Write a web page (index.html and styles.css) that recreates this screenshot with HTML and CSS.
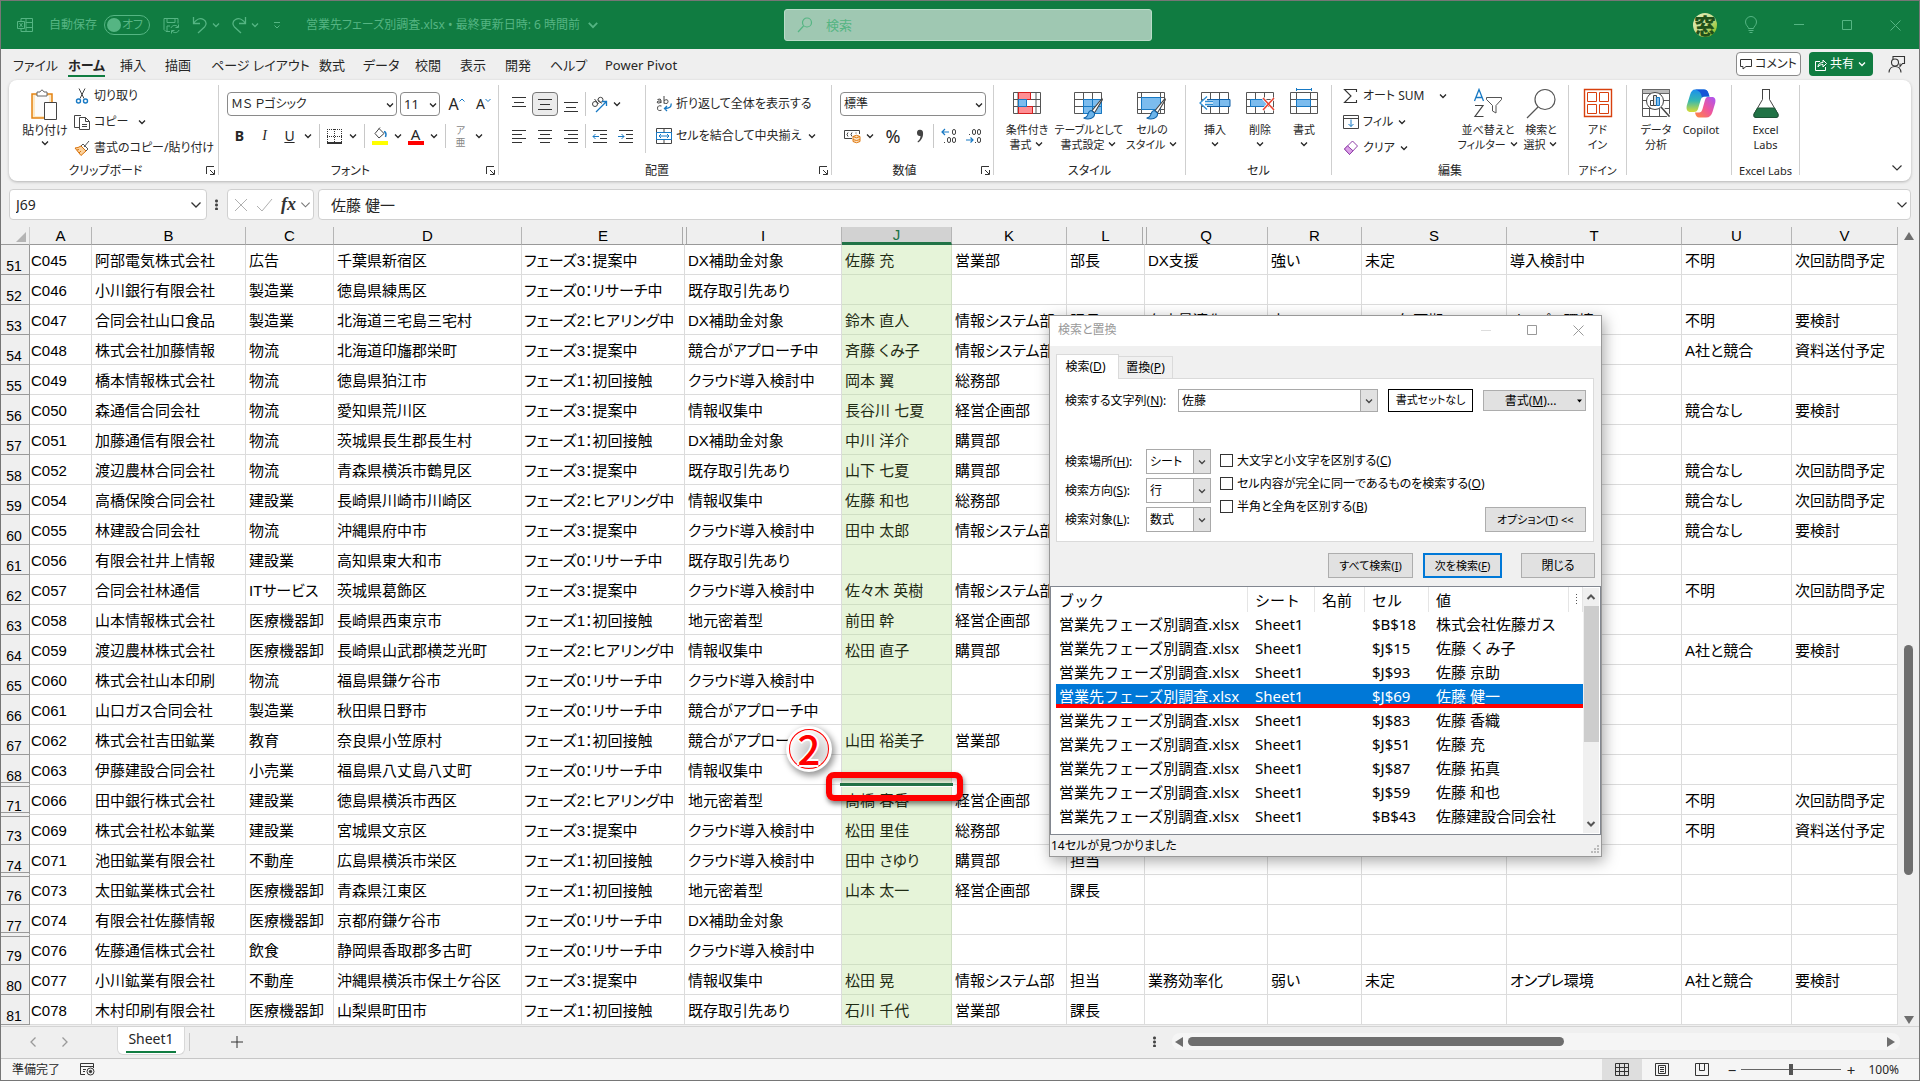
FILE: index.html
```html
<!DOCTYPE html>
<html lang="ja">
<head>
<meta charset="utf-8">
<title>営業先フェーズ別調査.xlsx</title>
<link rel="stylesheet" href="styles.css">
</head>
<body>
<svg class="sprite" aria-hidden="true">
  <symbol id="chev" viewBox="0 0 10 10"><path d="M2 3.5l3 3 3-3" fill="none" stroke="currentColor" stroke-width="1.3"/></symbol>
  <symbol id="launch" viewBox="0 0 9 9"><path d="M.5 8V.5H8M4 4l4 4M8.500 4v4.500H4" fill="none" stroke="#333"/></symbol>
  <symbol id="brush" viewBox="0 0 20 22"><path d="M18.500 1.500L9 13l2.500 2L19 2.500z" fill="#fff" stroke="#444"/><path d="M8.500 13c-3 0-3 3-4 5-.5 1.200-2 2-3.500 2 4 2 11 1 10.500-4.500z" fill="#6cb4ea" stroke="#0f62a8"/></symbol>
</svg>
<div class="window">
  <header class="titlebar">
    <div class="title-left">
      <svg class="app-icon" width="16" height="16" viewBox="0 0 16 16" fill="none" stroke="currentColor"><path d="M4 4V1.500h11.500v13H4V12M9 1.500v13M9 5.500h6.500M9 10.500h6.500"/><path d="M.5 4.500h7v7h-7zM2.500 6l3 4M5.500 6l-3 4"/></svg>
      <span class="autosave-label">自動保存</span>
      <button class="toggle" type="button"><i></i>オフ</button>
      <button class="save" type="button" aria-label="上書き保存"><svg width="17" height="17" viewBox="0 0 17 17" fill="none" stroke="currentColor"><path d="M7 14.500H3L1 12.500V1.500h14v5M4 1.500v4h8v-4M4 14v-5h3"/><path d="M8 11c1-3 5-3.500 7-1M15.500 7.500V10.500h-3M16 13c-1 3-5 3.500-7 1M8.500 16.500v-3h3"/></svg></button>
      <button class="undo" type="button" aria-label="元に戻す"><svg width="16" height="18" viewBox="0 0 16 18" fill="none" stroke="currentColor" stroke-width="1.300"><path d="M1.500 1v6.500H8M1.500 7.500C4 3.500 8 1.500 11.500 3.500s3 5.500 1 7.500L6 17"/></svg></button>
      <svg class="chev c-undo"><use href="#chev"/></svg>
      <button class="redo" type="button" aria-label="やり直し"><svg width="16" height="18" viewBox="0 0 16 18" fill="none" stroke="currentColor" stroke-width="1.300"><path d="M14.500 1v6.500H8M14.500 7.500C12 3.500 8 1.500 4.500 3.500s-3 5.500-1 7.500L10 17"/></svg></button>
      <svg class="chev c-undo"><use href="#chev"/></svg>
      <svg class="customize" width="10" height="10" viewBox="0 0 10 10" fill="none" stroke="currentColor"><path d="M2 2.500h6M2.500 5.500L5 8l2.500-2.500"/></svg>
      <span class="doc-title">営業先フェーズ別調査.xlsx • 最終更新日時: 6 時間前</span>
      <svg class="chev c-title"><use href="#chev"/></svg>
    </div>
    <label class="search">
      <svg width="16" height="16" viewBox="0 0 16 16" fill="none" stroke="currentColor" stroke-width="1.200"><circle cx="10" cy="5.500" r="4.500"/><path d="M6.500 9L1 15"/></svg>
      <input type="text" placeholder="検索" aria-label="検索">
    </label>
    <div class="title-right">
      <span class="avatar">窓</span>
      <button type="button" aria-label="ヒント"><svg width="14" height="18" viewBox="0 0 14 18" fill="none" stroke="currentColor"><path d="M4.500 12.500c0-2-3-3-3-6.500a5.500 5.500 0 0111 0c0 3.500-3 4.500-3 6.500zM4.500 14.500h5M5.500 16.500h3"/></svg></button>
      <button type="button" aria-label="最小化"><svg width="10" height="10" viewBox="0 0 10 10" stroke="currentColor"><path d="M0 4.500h10"/></svg></button>
      <button type="button" aria-label="最大化"><svg width="10" height="10" viewBox="0 0 10 10" fill="none" stroke="currentColor"><path d="M.5.5h9v9h-9z"/></svg></button>
      <button type="button" aria-label="閉じる"><svg width="11" height="11" viewBox="0 0 11 11" stroke="currentColor"><path d="M.5.5l10 10M10.500.5l-10 10"/></svg></button>
    </div>
  </header>

  <nav class="menubar">
    <div class="menus">
      <a href="#">ファイル</a><a href="#" class="on">ホーム</a><a href="#">挿入</a><a href="#">描画</a><a href="#">ページ レイアウト</a><a href="#">数式</a><a href="#">データ</a><a href="#">校閲</a><a href="#">表示</a><a href="#">開発</a><a href="#">ヘルプ</a><a href="#">Power Pivot</a>
    </div>
    <div class="menu-actions">
      <button class="comment" type="button"><svg width="12" height="12" viewBox="0 0 12 12" fill="none" stroke="#333"><path d="M.5 1.500h11v7H6l-3 2.500V8.500H.5z"/></svg>コメント</button>
      <button class="share" type="button"><svg width="12" height="13" viewBox="0 0 12 13" fill="none" stroke="#fff"><path d="M5 3.500H.5v9h10V9M3 9c0-3 2-4.500 5-4.500V2l3.500 3.500L8 9V6.500C6 6.500 4 7 3 9z"/></svg>共有<svg class="chev"><use href="#chev"/></svg></button>
      <button class="presence" type="button" aria-label="共有相手"><svg width="18" height="18" viewBox="0 0 18 18" fill="none" stroke="#333" stroke-width="1.100"><path d="M5 4V1.500h11.500v7h-2l-2.500 3V8.500"/><circle cx="7" cy="7.500" r="3.500"/><path d="M1 17.500c.5-8 11.500-8 12 0"/></svg></button>
    </div>
  </nav>

  <section class="ribbon">
    <div class="group g-clip">
      <div class="body">
        <button class="big paste" type="button"><svg width="30" height="32" viewBox="0 0 30 32"><path d="M2 5h20v24H2z" fill="#fde8c4" stroke="#e38312" stroke-width="1.500"/><path d="M5 7h14v20H5z" fill="#fbfbfb"/><path d="M7 3h3q2-4 4 0h3v4H7z" fill="#fff" stroke="#666"/><path d="M14.500 13.500h12v17h-12z" fill="#fff" stroke="#444"/></svg><span>貼り付け</span><svg class="chev"><use href="#chev"/></svg></button>
        <div class="stack">
          <button type="button"><svg width="16" height="16" viewBox="0 0 16 16" fill="none"><path d="M5 .5l5 10M11 .5l-5 10" stroke="#444"/><circle cx="4.500" cy="13" r="2" stroke="#1779c4" stroke-width="1.400"/><circle cx="11.500" cy="13" r="2" stroke="#1779c4" stroke-width="1.400"/></svg>切り取り</button>
          <button type="button"><svg width="16" height="16" viewBox="0 0 16 16" fill="none" stroke="#444"><path d="M5 13.500H.5V1.500H7M5.500 3.500h6l4 4v8h-10zM11.500 3.500v4h4M8 10.500h5M8 12.500h5"/></svg>コピー<svg class="chev far"><use href="#chev"/></svg></button>
          <button type="button"><svg width="16" height="16" viewBox="0 0 16 16"><path d="M15 1l-5 6M9 4l5 5-2 2-5-5z" fill="#fff" stroke="#555"/><path d="M7 6l5 5-5 4.500L1 8q3 0 6-2z" fill="#fbd19b" stroke="#d9730d"/><path d="M3 10l2-.5M5 13l2-2" stroke="#d9730d"/></svg>書式のコピー/貼り付け</button>
        </div>
      </div>
      <div class="label"><span>クリップボード</span><svg><use href="#launch"/></svg></div>
    </div>

    <div class="group g-font">
      <div class="body rows">
        <div class="row">
          <span class="combo w-font"><select aria-label="フォント"><option>ＭＳ Ｐゴシック</option></select><svg class="chev"><use href="#chev"/></svg></span>
          <span class="combo w-size"><select aria-label="フォント サイズ"><option>11</option></select><svg class="chev"><use href="#chev"/></svg></span>
          <button class="tool t27" type="button" aria-label="フォント サイズの拡大"><span class="fs-up">A</span><svg width="6" height="12" viewBox="0 0 6 12" fill="none" stroke="#1779c4"><path d="M.5 3.500L3 1l2.500 2.500"/></svg></button>
          <button class="tool t27" type="button" aria-label="フォント サイズの縮小"><span class="fs-down">A</span><svg width="6" height="12" viewBox="0 0 6 12" fill="none" stroke="#1779c4"><path d="M.5 1L3 3.500 5.500 1"/></svg></button>
        </div>
        <div class="row">
          <button class="tool t25" type="button"><b>B</b></button>
          <button class="tool t25" type="button"><i class="ital">I</i></button>
          <button class="tool t25" type="button"><u>U</u></button>
          <svg class="chev"><use href="#chev"/></svg><hr>
          <button class="tool t25" type="button" aria-label="罫線"><svg width="15" height="15" viewBox="0 0 15 15" fill="none" stroke="#333"><path d="M.5 0v14M14.500 0v14M7.500 0v14M0 .5h15M0 7.500h15" stroke-dasharray="1 1"/><path d="M0 14h15" stroke-width="2"/></svg></button>
          <svg class="chev"><use href="#chev"/></svg><hr>
          <button class="tool t25" type="button" aria-label="塗りつぶしの色"><svg width="16" height="18" viewBox="0 0 16 18"><path d="M7 1.500l5 5-5 4.500-4-4.500 5-6" fill="none" stroke="#444"/><path d="M12 4.500q3 1 1.500 5.500" stroke="#1779c4" fill="none" stroke-width="1.500"/><path d="M0 14h16v4H0z" fill="#ff0"/></svg></button>
          <svg class="chev"><use href="#chev"/></svg>
          <button class="tool t25 fcolor" type="button" aria-label="フォントの色"><span>A</span></button>
          <svg class="chev"><use href="#chev"/></svg><hr>
          <button class="tool t25 ruby" type="button"><span>ア</span><span>亜</span></button>
          <svg class="chev"><use href="#chev"/></svg>
        </div>
      </div>
      <div class="label"><span>フォント</span><svg><use href="#launch"/></svg></div>
    </div>

    <div class="group g-align">
      <div class="body">
        <div class="rows al-a">
          <div class="row">
            <button class="tool t26" type="button" aria-label="上揃え"><svg width="14" height="16" viewBox="0 0 14 16" stroke="#333"><path d="M0 1.500h14M2 6.500h10M0 10.500h14"/></svg></button>
            <button class="tool t26 pressed" type="button" aria-label="上下中央揃え"><svg width="14" height="16" viewBox="0 0 14 16" stroke="#333"><path d="M0 3.500h14M2 8.500h10M0 13.500h14"/></svg></button>
            <button class="tool t26" type="button" aria-label="下揃え"><svg width="14" height="16" viewBox="0 0 14 16" stroke="#333"><path d="M0 6.500h14M2 11.500h10M0 15.500h14"/></svg></button>
            <hr>
            <button class="tool t25" type="button" aria-label="方向"><svg width="17" height="17" viewBox="0 0 17 17" fill="none" stroke="#444"><circle cx="4" cy="8" r="2.500"/><path d="M3.500 3l4 5M7 3.500l3.500 4"/><circle cx="9.500" cy="3.800" r="2.500"/><path d="M5 16L15 6M15.500 10V5.500H11" stroke="#1779c4" stroke-width="1.300"/></svg></button>
            <svg class="chev"><use href="#chev"/></svg>
          </div>
          <div class="row">
            <button class="tool t26" type="button" aria-label="左揃え"><svg width="14" height="14" viewBox="0 0 14 14" stroke="#333"><path d="M0 1.500h14M0 5.500h10M0 9.500h14M0 13.500h10"/></svg></button>
            <button class="tool t26" type="button" aria-label="中央揃え"><svg width="14" height="14" viewBox="0 0 14 14" stroke="#333"><path d="M0 1.500h14M2 5.500h10M0 9.500h14M2 13.500h10"/></svg></button>
            <button class="tool t26" type="button" aria-label="右揃え"><svg width="14" height="14" viewBox="0 0 14 14" stroke="#333"><path d="M0 1.500h14M4 5.500h10M0 9.500h14M4 13.500h10"/></svg></button>
            <hr>
            <button class="tool t25" type="button" aria-label="インデントを減らす"><svg width="15" height="14" viewBox="0 0 15 14" fill="none" stroke="#333"><path d="M1 1.500h14M8 5.500h7M8 9.500h7M1 13.500h14"/><path d="M7 7.500H1M3.500 5L1 7.500 3.500 10" stroke="#1779c4"/></svg></button>
            <button class="tool t26" type="button" aria-label="インデントを増やす"><svg width="15" height="14" viewBox="0 0 15 14" fill="none" stroke="#333"><path d="M1 1.500h14M8 5.500h7M8 9.500h7M1 13.500h14"/><path d="M0 7.500h6M3.500 5L6 7.500 3.500 10" stroke="#1779c4"/></svg></button>
          </div>
        </div>
        <div class="rows al-b">
          <div class="row"><button class="text" type="button"><svg width="16" height="16" viewBox="0 0 16 16" fill="none" stroke="#444"><path d="M1.500 3.500q3.500-1.500 3.500 1v2.500M5 5q-4-.5-4 1.200T5 6.500M8 0v7.500M8 4.500q4-2 4 1t-4 1.500M5.500 10q-4-1-4 2.200t4 2"/><path d="M15 7.500q1 5-6.500 5M11 10l-2.500 2.500L11 15" stroke="#1779c4" stroke-width="1.300"/></svg>折り返して全体を表示する</button></div>
          <div class="row"><button class="text" type="button"><svg width="16" height="16" viewBox="0 0 16 16" fill="none" stroke="#444"><path d="M.5.5h15v4H.5zM.5 11.500h15v4H.5zM8 .5v4M8 11.500v4"/><path d="M.5 4.500h15v7H.5zM3 8h10M5 6L3 8l2 2M11 6l2 2-2 2" stroke="#1779c4"/></svg>セルを結合して中央揃え</button><svg class="chev"><use href="#chev"/></svg></div>
        </div>
      </div>
      <div class="label"><span>配置</span><svg><use href="#launch"/></svg></div>
    </div>

    <div class="group g-num">
      <div class="body rows">
        <div class="row"><span class="combo w-num"><select aria-label="表示形式"><option>標準</option></select><svg class="chev"><use href="#chev"/></svg></span></div>
        <div class="row">
          <button class="tool t25" type="button" aria-label="通貨"><svg width="17" height="15" viewBox="0 0 17 15" fill="none" stroke="#444"><path d="M8 9.500H.5v-8h15V5M4 3.500q-2 2 0 4M8 3.500q-2 2 0 4M12 3.500v1"/><path d="M9 7.500v5q3.500 2.500 7 0v-5q-3.500-2.500-7 0zm0 0q3.500 2.500 7 0M9 10.500q3.500 2 7 0" fill="#fde3c4" stroke="#e07a10"/></svg></button>
          <svg class="chev"><use href="#chev"/></svg>
          <button class="tool pct" type="button">%</button>
          <button class="tool t25" type="button" aria-label="桁区切り"><svg width="8" height="14" viewBox="0 0 8 14"><path d="M1 4a3 3 0 016-.5c.5 4-1.500 8-5 10l-.5-1c2-1.500 3-3.500 3-5.500-2 .5-3.500-1-3.500-3z" fill="#444"/></svg></button>
          <hr>
          <button class="tool t25" type="button" aria-label="小数点以下の表示桁数を増やす"><svg width="16" height="16" viewBox="0 0 16 16" fill="none" stroke="#444"><rect x="11.500" y="1.500" width="3" height="5" rx="1.500"/><rect x="6.500" y="9.500" width="3" height="5" rx="1.500"/><rect x="11.500" y="9.500" width="3" height="5" rx="1.500"/><path d="M3.500 14v1"/><path d="M8 4H1M4 1L1 4l3 3" stroke="#1779c4" stroke-width="1.200"/></svg></button>
          <button class="tool t26" type="button" aria-label="小数点以下の表示桁数を減らす"><svg width="16" height="16" viewBox="0 0 16 16" fill="none" stroke="#444"><rect x="6.500" y="1.500" width="3" height="5" rx="1.500"/><rect x="11.500" y="1.500" width="3" height="5" rx="1.500"/><rect x="11.500" y="9.500" width="3" height="5" rx="1.500"/><path d="M3.500 6v1M9.500 14v1"/><path d="M0 12h7M4.500 9.500L7 12l-2.500 2.500" stroke="#1779c4" stroke-width="1.200"/></svg></button>
        </div>
      </div>
      <div class="label"><span>数値</span><svg><use href="#launch"/></svg></div>
    </div>

    <div class="group g-style">
      <div class="body">
        <button class="big b60" type="button"><svg width="28" height="32" viewBox="0 0 28 32" fill="none"><path d="M.5 4.500h27v21H.5zM5 4.500v21M23 4.500v21M.5 11.500h27M.5 18.500h27" stroke="#555"/><path d="M5.500 4.500h12v7h-12zM5.500 18.500h14v7h-14z" fill="#ff8e93" stroke="#d41f1f"/><path d="M5.500 11.500h8v7h-8z" fill="#7cbcee" stroke="#1779c4"/></svg><span>条件付き<br>書式 <svg class="chev"><use href="#chev"/></svg></span></button>
        <button class="big b64" type="button"><svg width="32" height="32" viewBox="0 0 32 32" fill="none"><path d="M1.500 4.500h27v21h-27zM10.500 4.500v21M19.500 4.500v21M1.500 11.500h27M1.500 18.500h27" stroke="#555"/><path d="M10.500 11.500h18v14h-18z" fill="#7cbcee" stroke="#1779c4"/><path d="M19.500 11.500v14M10.500 18.500h18" stroke="#1779c4"/><svg x="9" y="9" width="22" height="23" viewBox="0 0 20 22"><use href="#brush"/></svg></svg><span>テーブルとして<br>書式設定 <svg class="chev"><use href="#chev"/></svg></span></button>
        <button class="big b62" type="button"><svg width="32" height="32" viewBox="0 0 32 32" fill="none"><path d="M1.500 4.500h27v21h-27zM5.500 4.500v21M24.500 4.500v21M1.500 9.500h27M1.500 21.500h27" stroke="#555"/><path d="M5.500 9.500h19v12h-19z" fill="#7cbcee" stroke="#1779c4"/><svg x="9" y="9" width="22" height="23" viewBox="0 0 20 22"><use href="#brush"/></svg></svg><span>セルの<br>スタイル <svg class="chev"><use href="#chev"/></svg></span></button>
      </div>
      <div class="label"><span>スタイル</span></div>
    </div>

    <div class="group g-cell">
      <div class="body">
        <button class="big b46" type="button"><svg width="32" height="32" viewBox="0 0 32 32" fill="none"><path d="M2.500 4.500h27v21h-27zM11.500 4.500v21M20.500 4.500v21M2.500 11.500h27M2.500 18.500h27" stroke="#555"/><path d="M9 11.500h22v7H9z" fill="#7cbcee" stroke="#1060a8"/><path d="M20.500 11.500v7" stroke="#1060a8"/><path d="M14 12.500H8V8L0 15l8 7v-4.500h6z" fill="#fff"/><path d="M14 13.500H6M14 16.500H6M8 8.500L1 15l7 6.500" stroke="#2c8fd6" stroke-width="1.300"/></svg><span>挿入<br><svg class="chev"><use href="#chev"/></svg></span></button>
        <button class="big b44" type="button"><svg width="30" height="32" viewBox="0 0 30 32" fill="none"><path d="M1.500 4.500h27v21h-27zM10.500 4.500v21M19.500 4.500v21M1.500 11.500h27M1.500 18.500h27" stroke="#555"/><path d="M5.500 11.500h15l3 3.500-3 3.500h-15z" fill="#7cbcee" stroke="#1779c4"/><path d="M18 10l11 12M29 10L18 22" stroke="#fff" stroke-width="3"/><path d="M18 10l11 12M29 10L18 22" stroke="#e8412f" stroke-width="1.500"/></svg><span>削除<br><svg class="chev"><use href="#chev"/></svg></span></button>
        <button class="big b44" type="button"><svg width="30" height="32" viewBox="0 0 30 32" fill="none"><path d="M1.500 4.500h27v21h-27zM7.500 4.500v21M21.500 4.500v21M1.500 11.500h27M1.500 18.500h27" stroke="#555"/><path d="M7.500 11.500h14v7h-14z" fill="#7cbcee" stroke="#1779c4"/><path d="M7.500 0v3M22.500 0v3M7.500 1.500h15" stroke="#1779c4"/></svg><span>書式<br><svg class="chev"><use href="#chev"/></svg></span></button>
      </div>
      <div class="label"><span>セル</span></div>
    </div>

    <div class="group g-edit">
      <div class="body">
        <div class="stack">
          <button type="button"><svg width="16" height="16" viewBox="0 0 16 16" fill="none" stroke="#333" stroke-width="1.100"><path d="M13.500 4V1.500h-12L8 8l-6.500 6.500h12V12"/></svg>オート SUM<svg class="chev far"><use href="#chev"/></svg></button>
          <button type="button"><svg width="16" height="14" viewBox="0 0 16 14" fill="none" stroke="#444"><path d="M.5.5h15v13H.5zM.5 3.500h15"/><path d="M8 4.500v7M5.500 9L8 11.500 10.500 9" stroke="#1779c4"/></svg>フィル <svg class="chev"><use href="#chev"/></svg></button>
          <button type="button"><svg width="16" height="16" viewBox="0 0 16 16" stroke="#8f3fa8"><path d="M9.500 1l5 5-8 8.500-5-5.500z" fill="#fff"/><path d="M4.500 5.800l5.500 5-3.500 3.700-5-5.500z" fill="#dca0e8"/></svg>クリア <svg class="chev"><use href="#chev"/></svg></button>
        </div>
        <button class="big b56" type="button"><svg width="30" height="32" viewBox="0 0 30 32" fill="none"><path d="M1.500 13L6 1.500 10.500 13M3 9.500h6" stroke="#1779c4" stroke-width="1.300"/><path d="M2 17.500h8L2 28.500h8.500" stroke="#444" stroke-width="1.200"/><path d="M13.500 9.500h15v2l-5.500 6v7.500l-3.500-2v-5.500l-6-6z" stroke="#555"/></svg><span>並べ替えと<br>フィルター <svg class="chev"><use href="#chev"/></svg></span></button>
        <button class="big b50" type="button"><svg width="30" height="32" viewBox="0 0 30 32" fill="none" stroke="#555" stroke-width="1.200"><circle cx="19" cy="11.500" r="10"/><path d="M12 19L1 30"/></svg><span>検索と<br>選択 <svg class="chev"><use href="#chev"/></svg></span></button>
      </div>
      <div class="label"><span>編集</span></div>
    </div>

    <div class="group g-addin">
      <div class="body"><button class="big b58" type="button"><svg width="30" height="32" viewBox="0 0 30 32" fill="none" stroke="#d8400e"><path d="M1.500 1.500h27v27h-27z" stroke-width="1.400"/><path d="M4.500 4.500h9v9h-9zM16.500 4.500h9v9h-9zM4.500 16.500h9v9h-9zM16.500 16.500h9v9h-9z"/></svg><span>アド<br>イン</span></button></div>
      <div class="label"><span>アドイン</span></div>
    </div>

    <div class="group g-data">
      <div class="body">
        <button class="big b50" type="button"><svg width="30" height="32" viewBox="0 0 30 32" fill="none"><path d="M1.500 1.500h27v27h-27zM1.500 5.500h27M1.500 12.500h27M1.500 20.500h27M8.500 20v8.500M18.500 20v8.500" stroke="#555"/><path d="M1.500 1.500h27v4h-27z" fill="#bbb" stroke="#666"/><circle cx="14" cy="13" r="8.500" fill="#fff" stroke="#444"/><path d="M20 19l8 9" stroke="#fff" stroke-width="3.500"/><path d="M20 19l8 9" stroke="#444" stroke-width="1.500"/><path d="M9.500 12.500h3v5h-3z" stroke="#444"/><path d="M12.500 7.500h3v10h-3z" fill="#ddd" stroke="#444"/><path d="M15.500 9.500h3v8h-3z" fill="#7cbcee" stroke="#1779c4"/></svg><span>データ<br>分析</span></button>
        <button class="big b40" type="button"><svg width="30" height="32" viewBox="0 0 30 32"><defs><linearGradient id="c1" x1="0" y1="0" x2="0" y2="1"><stop offset="0" stop-color="#1b8fee"/><stop offset=".5" stop-color="#35b8b0"/><stop offset="1" stop-color="#d8dc33"/></linearGradient><linearGradient id="c2" x1="1" y1="0" x2="0" y2="1"><stop offset="0" stop-color="#a855f7"/><stop offset=".5" stop-color="#f0569a"/><stop offset="1" stop-color="#ff8a3c"/></linearGradient></defs><path d="M21 9h5c3 0 4 2.500 3.200 6l-2.700 9c-1 3.500-3 5.500-6.500 5.500h-7q-3 0-4-5h4q2.500 0 3.500-3.500L19 12q.5-2 2-3z" fill="url(#c2)"/><path d="M9 1.500h9q3.500 0 4.500 4l1 3h-5q-3 0-4 4l-2.500 8.500q-1 3-4 3H5c-4 0-5-2.500-4.200-6.500L4 7q1.500-5.500 5-5.500z" fill="url(#c1)"/><path d="M9 1.500h9q3.500 0 4.500 4l1 3h-5q-1.500 0-2.500 1-1-7-7-8z" fill="#1556d6"/></svg><span>Copilot</span></button>
      </div>
      <div class="label"></div>
    </div>

    <div class="group g-labs">
      <div class="body"><button class="big b68" type="button"><svg width="28" height="32" viewBox="0 0 28 32"><path d="M10.500 1.500v10L2 26q-1 3.500 2 3.500h20q3 0 2-3.500l-8.500-14.500v-10z" fill="#fff" stroke="#444"/><path d="M5.500 20h17l3.500 6q1 3.500-2 3.500H4Q1 29.500 2 26z" fill="#217346" stroke="#1c5537"/><path d="M10 1.500h8" stroke="#444"/></svg><span>Excel<br>Labs</span></button></div>
      <div class="label"><span>Excel Labs</span></div>
    </div>
    <button class="collapse" type="button" aria-label="リボンを折りたたむ"><svg width="12" height="12" viewBox="0 0 12 12" fill="none" stroke="#333" stroke-width="1.200"><path d="M1.500 3.500L6 8l4.500-4.500"/></svg></button>
  </section>

  <section class="formula-bar">
    <div class="namebox box"><input type="text" value="J69" aria-label="名前ボックス"><svg width="12" height="12" viewBox="0 0 12 12" fill="none" stroke="#333" stroke-width="1.300"><path d="M1.500 3.500L6 8l4.500-4.500"/></svg></div>
    <span class="vdots"></span>
    <div class="fx box"><svg width="14" height="14" viewBox="0 0 14 14" stroke="#b0b0b0"><path d="M1 1l12 12M13 1L1 13"/></svg><svg width="17" height="14" viewBox="0 0 17 14" fill="none" stroke="#b0b0b0"><path d="M1 8l5 5L16 1"/></svg><i>fx</i><svg width="11" height="12" viewBox="0 0 12 12" fill="none" stroke="#777" stroke-width="1.200"><path d="M1.500 3.500L6 8l4.500-4.500"/></svg></div>
    <div class="formula box"><input type="text" value="佐藤 健一" aria-label="数式バー"><svg width="12" height="12" viewBox="0 0 12 12" fill="none" stroke="#333" stroke-width="1.200"><path d="M1.500 3.500L6 8l4.500-4.500"/></svg></div>
  </section>

  <main class="sheet">
    <table class="grid">
      <colgroup><col class="c0"><col class="ca"><col class="cb"><col class="cc"><col class="cd"><col class="ce"><col class="ci"><col class="cj"><col class="ck"><col class="cl"><col class="cq"><col class="cr"><col class="cs"><col class="ct"><col class="cu"><col class="cv"></colgroup>
      <thead><tr><th class="corner"><svg width="10" height="10" viewBox="0 0 10 10"><path d="M10 0v10H0z" fill="#b4b4b4"/></svg></th><th>A</th><th>B</th><th>C</th><th>D</th><th class="cut">E</th><th class="after">I</th><th class="sel">J</th><th>K</th><th class="cut">L</th><th class="after">Q</th><th>R</th><th>S</th><th>T</th><th>U</th><th>V</th></tr></thead>
      <tbody>
      <tr><th>51<td>C045<td>阿部電気株式会社<td>広告<td>千葉県新宿区<td>フェーズ3：提案中<td>DX補助金対象<td>佐藤 充<td>営業部<td>部長<td>DX支援<td>強い<td>未定<td>導入検討中<td>不明<td>次回訪問予定
      <tr><th>52<td>C046<td>小川銀行有限会社<td>製造業<td>徳島県練馬区<td>フェーズ0：リサーチ中<td>既存取引先あり<td><td><td><td><td><td><td><td><td>
      <tr><th>53<td>C047<td>合同会社山口食品<td>製造業<td>北海道三宅島三宅村<td>フェーズ2：ヒアリング中<td>DX補助金対象<td>鈴木 直人<td>情報システム部<td>課長<td>在庫最適化<td>中<td>2025年下期<td>オンプレ環境<td>不明<td>要検討
      <tr><th>54<td>C048<td>株式会社加藤情報<td>物流<td>北海道印旛郡栄町<td>フェーズ3：提案中<td>競合がアプローチ中<td>斉藤 くみ子<td>情報システム部<td><td><td><td><td><td>A社と競合<td>資料送付予定
      <tr><th>55<td>C049<td>橋本情報株式会社<td>物流<td>徳島県狛江市<td>フェーズ1：初回接触<td>クラウド導入検討中<td>岡本 翼<td>総務部<td><td><td><td><td><td><td>
      <tr><th>56<td>C050<td>森通信合同会社<td>物流<td>愛知県荒川区<td>フェーズ3：提案中<td>情報収集中<td>長谷川 七夏<td>経営企画部<td><td><td><td><td><td>競合なし<td>要検討
      <tr><th>57<td>C051<td>加藤通信有限会社<td>物流<td>茨城県長生郡長生村<td>フェーズ1：初回接触<td>DX補助金対象<td>中川 洋介<td>購買部<td><td><td><td><td><td><td>
      <tr><th>58<td>C052<td>渡辺農林合同会社<td>物流<td>青森県横浜市鶴見区<td>フェーズ3：提案中<td>既存取引先あり<td>山下 七夏<td>購買部<td><td><td><td><td><td>競合なし<td>次回訪問予定
      <tr><th>59<td>C054<td>高橋保険合同会社<td>建設業<td>長崎県川崎市川崎区<td>フェーズ2：ヒアリング中<td>情報収集中<td>佐藤 和也<td>総務部<td><td><td><td><td><td>競合なし<td>次回訪問予定
      <tr><th>60<td>C055<td>林建設合同会社<td>物流<td>沖縄県府中市<td>フェーズ3：提案中<td>クラウド導入検討中<td>田中 太郎<td>情報システム部<td><td><td><td><td><td>競合なし<td>要検討
      <tr><th>61<td>C056<td>有限会社井上情報<td>建設業<td>高知県東大和市<td>フェーズ0：リサーチ中<td>既存取引先あり<td><td><td><td><td><td><td><td><td>
      <tr><th>62<td>C057<td>合同会社林通信<td>ITサービス<td>茨城県葛飾区<td>フェーズ3：提案中<td>クラウド導入検討中<td>佐々木 英樹<td>情報システム部<td><td><td><td><td><td>不明<td>次回訪問予定
      <tr><th>63<td>C058<td>山本情報株式会社<td>医療機器卸<td>長崎県西東京市<td>フェーズ1：初回接触<td>地元密着型<td>前田 幹<td>経営企画部<td><td><td><td><td><td><td>
      <tr><th>64<td>C059<td>渡辺農林株式会社<td>医療機器卸<td>長崎県山武郡横芝光町<td>フェーズ2：ヒアリング中<td>情報収集中<td>松田 直子<td>購買部<td><td><td><td><td><td>A社と競合<td>要検討
      <tr><th>65<td>C060<td>株式会社山本印刷<td>物流<td>福島県鎌ケ谷市<td>フェーズ0：リサーチ中<td>クラウド導入検討中<td><td><td><td><td><td><td><td><td>
      <tr><th>66<td>C061<td>山口ガス合同会社<td>製造業<td>秋田県日野市<td>フェーズ0：リサーチ中<td>競合がアプローチ中<td><td><td><td><td><td><td><td><td>
      <tr><th>67<td>C062<td>株式会社吉田鉱業<td>教育<td>奈良県小笠原村<td>フェーズ1：初回接触<td>競合がアプローチ中<td>山田 裕美子<td>営業部<td><td><td><td><td><td><td>
      <tr><th class="fold">68<td>C063<td>伊藤建設合同会社<td>小売業<td>福島県八丈島八丈町<td>フェーズ0：リサーチ中<td>情報収集中<td><td><td><td><td><td><td><td><td>
      <tr><th class="unfold fold">71<td>C066<td>田中銀行株式会社<td>建設業<td>徳島県横浜市西区<td>フェーズ2：ヒアリング中<td>地元密着型<td>高橋 春香<td>経営企画部<td><td><td><td><td><td>不明<td>次回訪問予定
      <tr><th class="unfold">73<td>C069<td>株式会社松本鉱業<td>建設業<td>宮城県文京区<td>フェーズ3：提案中<td>クラウド導入検討中<td>松田 里佳<td>総務部<td><td><td><td><td><td>不明<td>資料送付予定
      <tr><th class="fold">74<td>C071<td>池田鉱業有限会社<td>不動産<td>広島県横浜市栄区<td>フェーズ1：初回接触<td>クラウド導入検討中<td>田中 さゆり<td>購買部<td>担当<td><td><td><td><td><td>
      <tr><th class="unfold">76<td>C073<td>太田鉱業株式会社<td>医療機器卸<td>青森県江東区<td>フェーズ1：初回接触<td>地元密着型<td>山本 太一<td>経営企画部<td>課長<td><td><td><td><td><td>
      <tr><th class="fold">77<td>C074<td>有限会社佐藤情報<td>医療機器卸<td>京都府鎌ケ谷市<td>フェーズ0：リサーチ中<td>DX補助金対象<td><td><td><td><td><td><td><td><td>
      <tr><th class="unfold">79<td>C076<td>佐藤通信株式会社<td>飲食<td>静岡県香取郡多古町<td>フェーズ0：リサーチ中<td>クラウド導入検討中<td><td><td><td><td><td><td><td><td>
      <tr><th>80<td>C077<td>小川鉱業有限会社<td>不動産<td>沖縄県横浜市保土ケ谷区<td>フェーズ3：提案中<td>情報収集中<td>松田 晃<td>情報システム部<td>担当<td>業務効率化<td>弱い<td>未定<td>オンプレ環境<td>A社と競合<td>要検討
      <tr><th>81<td>C078<td>木村印刷有限会社<td>医療機器卸<td>山梨県町田市<td>フェーズ1：初回接触<td>既存取引先あり<td>石川 千代<td>営業部<td>課長<td><td><td><td><td><td>
      </tbody>
    </table>
    <div class="vscroll"><svg width="10" height="8" viewBox="0 0 10 8"><path d="M5 0l5 8H0z" fill="#6e6e6e"/></svg><div class="vtrack"><div class="vthumb"></div></div><svg width="10" height="8" viewBox="0 0 10 8"><path d="M5 8L0 0h10z" fill="#6e6e6e"/></svg></div>

    <div class="active-line"></div>
    <div class="mark-box"></div>
    <div class="mark-num">2</div>

    <div class="dialog" role="dialog" aria-label="検索と置換">
      <div class="dlg-title"><span>検索と置換</span>
        <button type="button" aria-label="最小化" disabled><svg width="10" height="10" viewBox="0 0 10 10" stroke="#ddd"><path d="M0 5.500h10"/></svg></button>
        <button type="button" aria-label="最大化"><svg width="10" height="10" viewBox="0 0 10 10" fill="none" stroke="#999"><path d="M.5.5h9v9h-9z"/></svg></button>
        <button type="button" aria-label="閉じる"><svg width="11" height="11" viewBox="0 0 11 11" stroke="#999"><path d="M.5.5l10 10M10.500.5l-10 10"/></svg></button>
      </div>
      <div class="dlg-tabs"><button class="on" type="button">検索(<u>D</u>)</button><button type="button">置換(<u>P</u>)</button></div>
      <div class="panel">
        <div class="find-row">
          <label for="what">検索する文字列(<u>N</u>):</label>
          <span class="wcombo what"><input id="what" type="text" value="佐藤"><button type="button" aria-label="履歴"><svg class="chev"><use href="#chev"/></svg></button></span>
          <output>書式セットなし</output>
          <button class="wbtn fmt" type="button"><span>書式(<u>M</u>)...</span><svg width="5" height="4" viewBox="0 0 5 4"><path d="M0 .5h5L2.500 3.500z"/></svg></button>
        </div>
        <div class="opts">
          <div class="sel-grid">
            <label for="where">検索場所(<u>H</u>):</label><span class="wcombo"><select id="where"><option>シート</option></select><i><svg class="chev"><use href="#chev"/></svg></i></span>
            <label for="dir">検索方向(<u>S</u>):</label><span class="wcombo"><select id="dir"><option>行</option></select><i><svg class="chev"><use href="#chev"/></svg></i></span>
            <label for="look">検索対象(<u>L</u>):</label><span class="wcombo"><select id="look"><option>数式</option></select><i><svg class="chev"><use href="#chev"/></svg></i></span>
          </div>
          <div class="checks">
            <label><input type="checkbox"><span>大文字と小文字を区別する(<u>C</u>)</span></label>
            <label><input type="checkbox"><span>セル内容が完全に同一であるものを検索する(<u>O</u>)</span></label>
            <label><input type="checkbox"><span>半角と全角を区別する(<u>B</u>)</span></label>
          </div>
          <button class="wbtn opt" type="button"><span>オプション(<u>T</u>) &lt;&lt;</span></button>
        </div>
      </div>
      <div class="dlg-buttons">
        <button class="wbtn all" type="button"><span>すべて検索(<u>I</u>)</span></button>
        <button class="wbtn next" type="button"><span>次を検索(<u>F</u>)</span></button>
        <button class="wbtn close" type="button"><span>閉じる</span></button>
      </div>
      <div class="results">
        <table>
          <colgroup><col class="r1"><col class="r2"><col class="r3"><col class="r4"><col class="r5"><col></colgroup>
          <thead><tr><th>ブック</th><th>シート</th><th>名前</th><th>セル</th><th>値</th><th class="more"><span></span></th></tr></thead>
          <tbody>
            <tr><td>営業先フェーズ別調査.xlsx<td>Sheet1<td><td>$B$18<td colspan="2">株式会社佐藤ガス
            <tr><td>営業先フェーズ別調査.xlsx<td>Sheet1<td><td>$J$15<td colspan="2">佐藤 くみ子
            <tr><td>営業先フェーズ別調査.xlsx<td>Sheet1<td><td>$J$93<td colspan="2">佐藤 京助
            <tr class="hit"><td>営業先フェーズ別調査.xlsx<td>Sheet1<td><td>$J$69<td colspan="2">佐藤 健一
            <tr><td>営業先フェーズ別調査.xlsx<td>Sheet1<td><td>$J$83<td colspan="2">佐藤 香織
            <tr><td>営業先フェーズ別調査.xlsx<td>Sheet1<td><td>$J$51<td colspan="2">佐藤 充
            <tr><td>営業先フェーズ別調査.xlsx<td>Sheet1<td><td>$J$87<td colspan="2">佐藤 拓真
            <tr><td>営業先フェーズ別調査.xlsx<td>Sheet1<td><td>$J$59<td colspan="2">佐藤 和也
            <tr><td>営業先フェーズ別調査.xlsx<td>Sheet1<td><td>$B$43<td colspan="2">佐藤建設合同会社
          </tbody>
        </table>
        <div class="rscroll"><svg width="10" height="10" viewBox="0 0 10 10" fill="none" stroke="#555" stroke-width="2"><path d="M1.500 7L5 3.500 8.500 7"/></svg><div class="rtrack"><div class="rthumb"></div></div><svg width="10" height="10" viewBox="0 0 10 10" fill="none" stroke="#555" stroke-width="2"><path d="M1.500 3L5 6.500 8.500 3"/></svg></div>
      </div>
      <div class="dlg-status"><span>14セルが見つかりました</span><svg width="9" height="9" viewBox="0 0 9 9" fill="#bbb"><path d="M6 0h2v2H6zM3 3h2v2H3zM6 3h2v2H6zM0 6h2v2H0zM3 6h2v2H3zM6 6h2v2H6z"/></svg></div>
    </div>
  </main>

  <div class="tabbar">
    <svg class="nav" width="8" height="12" viewBox="0 0 8 12"><path d="M6.500 1.500L2 6l4.500 4.500" fill="none" stroke="#999" stroke-width="1.300"/></svg>
    <svg class="nav n2" width="8" height="12" viewBox="0 0 8 12"><path d="M1.500 1.500L6 6l-4.500 4.500" fill="none" stroke="#999" stroke-width="1.300"/></svg>
    <button class="sheet-tab" type="button"><span>Sheet1</span></button>
    <hr>
    <button class="add" type="button" aria-label="新しいシート"><svg width="12" height="12" viewBox="0 0 12 12" stroke="#333"><path d="M6 0v12M0 6h12"/></svg></button>
    <span class="vdots"></span>
    <div class="hscroll"><svg width="8" height="10" viewBox="0 0 8 10"><path d="M8 0v10L0 5z" fill="#6e6e6e"/></svg><div class="htrack"><div class="hthumb"></div></div><svg width="8" height="10" viewBox="0 0 8 10"><path d="M0 0l8 5-8 5z" fill="#6e6e6e"/></svg></div>
  </div>
  <footer class="statusbar">
    <span>準備完了</span>
    <svg class="macro" width="15" height="13" viewBox="0 0 15 13" fill="none" stroke="#333"><path d="M5 11.500H.5V.5h13V5M.5 3.500h13M3 6.500h3M3 8.500h2"/><circle cx="10.500" cy="8.500" r="3.500"/><circle cx="10.500" cy="8.500" r="1.200" fill="#333"/></svg>
    <div class="views">
      <button class="on" type="button" aria-label="標準"><svg width="14" height="14" viewBox="0 0 14 14" fill="none" stroke="#333"><path d="M.5.5h13v12H.5zM.5 4.500h13M.5 8.500h13M4.500.5v12M9.500.5v12"/></svg></button>
      <button type="button" aria-label="ページ レイアウト"><svg width="14" height="14" viewBox="0 0 14 14" fill="none" stroke="#333"><path d="M.5.5h13v12H.5zM3.500 2.500h7v8h-7zM5 4.500h4M5 6.500h4M5 8.500h4"/></svg></button>
      <button type="button" aria-label="改ページ プレビュー"><svg width="14" height="14" viewBox="0 0 14 14" fill="none" stroke="#333"><path d="M.5.5h13v12H.5zM4.500.5v7h5v-7"/></svg></button>
      <span class="pm">−</span><input class="zoom" type="range" min="0" max="100" value="50" aria-label="ズーム"><span class="pm">+</span><span class="pct100">100%</span>
    </div>
  </footer>
</div>
</body>
</html>
```
FILE: styles.css
```css
* { box-sizing: border-box; }
body { margin: 0; font: 12px/16px "Noto Sans", "Noto Sans CJK JP", sans-serif; font-feature-settings: "palt"; color: #262626; background: #efefef; }
button, input, select { font: inherit; font-feature-settings: inherit; color: inherit; border: 0; background: none; padding: 0; margin: 0; border-radius: 0; outline: 0; }
button { white-space: nowrap; }
svg { display: block; flex: none; }
select { appearance: none; }
hr { margin: 0; border: 0; width: 1px; flex: none; background: #c8c8c8; }
.sprite { position: absolute; width: 0; height: 0; }
.chev { width: 10px; height: 10px; }
.window { min-height: 100vh; border: 1px solid #767676; display: flex; flex-direction: column; }

/* title bar */
.titlebar { height: 48px; background: #107c41; color: #55b583; display: grid; grid-template-columns: 1fr 368px 1fr; align-items: center; padding-left: 16px; }
.title-left { display: flex; align-items: center; white-space: nowrap; }
.autosave-label { width: 55px; margin-left: 16px; }
.toggle { width: 46px; height: 20px; border: 1px solid #55b583; border-radius: 10px; display: flex; align-items: center; justify-content: space-between; padding: 0 6px 0 2px; line-height: 16px; }
.toggle i { width: 14px; height: 14px; border-radius: 7px; background: #55b583; }
.save { margin-left: 13px; }
.undo { margin-left: 12px; }
.redo { margin-left: 10px; }
.c-undo { margin-left: 3px; }
.customize { margin-left: 12px; }
.doc-title { margin-left: 24px; }
.c-title { width: 14px; height: 14px; margin-left: 6px; }
.search { height: 32px; background: #9fc8b2; border: 1px solid #b9dcc8; border-radius: 3px; display: flex; align-items: center; gap: 13px; padding: 0 12px; color: #55b583; }
.search input { flex: 1; font-size: 13px; }
.search input::placeholder { color: #55b583; opacity: 1; }
.title-right { display: flex; justify-content: flex-end; align-items: center; }
.title-right button { width: 48px; height: 48px; display: grid; place-items: center; }
.avatar { width: 24px; height: 24px; margin-right: 10px; border-radius: 12px; overflow: hidden; background: linear-gradient(135deg, #e6efc0, #c9dd8e 50%, #7fb800); color: #20501a; font: 900 22px/23px "Noto Sans CJK JP", sans-serif; text-align: center; }

/* menu row */
.menubar { height: 31px; display: flex; justify-content: space-between; }
.menus { display: grid; grid-template-columns: 55px 52px 45px 46px 108px 44px 52px 45px 45px 45px 55px auto; padding-left: 12px; font-size: 13px; line-height: 32px; }
.menus a { color: inherit; text-decoration: none; justify-self: start; white-space: nowrap; height: 28px; }
.menus .on { font-weight: 700; border-bottom: 2px solid #107c41; }
.menu-actions { display: flex; gap: 8px; padding: 3px 11px 0 0; }
.menu-actions button { height: 24px; display: flex; align-items: center; justify-content: center; gap: 3px; }
.comment { width: 65px; border: 1px solid #8a8a8a; border-radius: 4px; background: #fff; font-size: 12px; }
.share { width: 64px; border-radius: 4px; background: #107c41; color: #fff; }
.presence { width: 27px; padding-left: 4px; }

/* ribbon */
.ribbon { margin: 0 8px; height: 101px; background: #fff; border-radius: 8px; box-shadow: 0 1px 3px rgba(0,0,0,.25); display: flex; align-items: flex-start; padding-top: 5px; }
.group { height: 90px; border-right: 1px solid #cfcfcf; flex: none; }
.body { height: 77px; display: flex; align-items: flex-start; }
.label { height: 13px; line-height: 18px; display: flex; text-align: center; white-space: nowrap; }
.label span { flex: 1; }
.label svg { width: 9px; height: 9px; margin: 4px 3px 0 4px; }
.g-clip { width: 210px; } .g-font { width: 280px; } .g-align { width: 333px; } .g-num { width: 162px; }
.g-style { width: 192px; } .g-cell { width: 146px; } .g-edit { width: 237px; } .g-addin { width: 58px; }
.g-data { width: 105px; } .g-labs { width: 68px; }
.g-labs .label, .g-addin .label { font-size: 11px; }
.big { display: flex; flex-direction: column; align-items: center; padding-top: 3px; font-size: 11px; line-height: 15px; }
.big > span { margin-top: 2px; white-space: nowrap; }
.big span .chev { display: inline-block; }
.paste { width: 54px; margin: 0 6px 0 9px; padding-top: 4px; font-size: 12px; }
.b60 { width: 60px; } .b64 { width: 64px; } .b62 { width: 62px; } .b46 { width: 46px; } .b44 { width: 44px; }
.b56 { width: 56px; } .b50 { width: 50px; } .b58 { width: 57px; } .b40 { width: 40px; } .b68 { width: 67px; }
.g-style .body { padding-left: 3px; }
.g-cell .body { padding-left: 6px; }
.g-data .body { padding-left: 4px; }
.g-clip .stack { margin-left: -4px; }
.g-edit .stack { width: 128px; padding-left: 11px; }
.stack { display: flex; flex-direction: column; gap: 4px; }
.stack button { height: 22px; display: flex; align-items: center; gap: 4px; }
.g-clip .far { margin-left: 5px; }
.g-edit .far { margin-left: 10px; }
.rows { display: flex; flex-direction: column; gap: 8px; padding-top: 7px; }
.row { height: 24px; display: flex; align-items: center; }
.row hr { height: 24px; }
.g-font .body, .g-num .body { padding-left: 8px; }
.combo { display: flex; position: relative; height: 24px; border: 1px solid #8a8a8a; border-radius: 4px; margin-right: 3px; }
.combo select { width: 100%; padding-left: 3px; }
.combo .chev { position: absolute; right: 1px; top: 7px; }
.w-font { width: 170px; } .w-size { width: 40px; font-size: 13px; } .w-num { width: 146px; }
.tool { height: 24px; display: flex; align-items: center; justify-content: center; font-size: 14px; }
.t25 { width: 25px; } .t26 { width: 26px; } .t27 { width: 27px; }
.fs-up { font-size: 16px; } .fs-down { font-size: 14px; }
.g-font .chev + hr { margin: 0 2px 0 6px; }
.g-font .row .t25 + .chev { margin-left: 1px; }
.ital { font-family: "Liberation Serif", serif; }
.row .pct { width: 28px; margin-left: 4px; font-size: 18px; }
.fcolor span { width: 16px; height: 18px; line-height: 14px; font-size: 15px; border-bottom: 4px solid #f00; }
.ruby { flex-direction: column; color: #888; font-size: 10px; line-height: 12px; }
.pressed { border: 1px solid #777; border-radius: 4px; background: #ebebeb; }
.al-a { width: 146px; padding-left: 7px; }
.al-a hr { margin: 0 1px; }
.al-b { border-left: 1px solid #cfcfcf; height: 68px; padding: 7px 0 0 10px; }
.al-b .row { width: 161px; justify-content: space-between; }
.text { display: flex; align-items: center; gap: 4px; }
.g-num hr { margin: 0 2px 0 1px; }
.collapse { margin: 77px 8px 0 auto; }

/* formula bar */
.formula-bar { display: flex; margin: 8px 8px 7px; height: 31px; }
.box { background: #fff; border: 1px solid #d0d0d0; border-radius: 4px; display: flex; align-items: center; }
.box input { flex: 1; min-width: 0; }
.namebox { width: 198px; padding: 0 4px 0 6px; font-size: 14px; }
.vdots { width: 3px; height: 11px; align-self: center; background: radial-gradient(circle, #444 1px, transparent 2px) 0 0 / 3px 4px; }
.formula-bar .vdots { margin: 0 9px 0 8px; }
.fx { width: 87px; padding-left: 6px; gap: 8px; margin-right: 4px; }
.fx i { font: italic 700 18px "Liberation Serif", serif; color: #333; margin-right: -4px; }
.formula { flex: 1; padding: 0 2px 0 12px; font-size: 15px; }

/* worksheet */
.sheet { position: relative; display: flex; padding-bottom: 1px; border-bottom: 1px solid #d4d4d4; }
.grid { flex: 1; width: 100%; table-layout: fixed; border-collapse: separate; border-spacing: 0; font: 15px/18px "Liberation Sans", "Noto Sans CJK JP", sans-serif; font-feature-settings: "palt"; color: #000; }
.c0 { width: 29px; } .ca { width: 62px; } .cb { width: 154px; } .cc { width: 88px; } .cd { width: 188px; } .ce { width: 163px; }
.ci { width: 157px; } .cj { width: 110px; } .ck { width: 115px; } .cl { width: 78px; } .cq { width: 123px; } .cr { width: 94px; }
.cs { width: 145px; } .ct { width: 175px; } .cu { width: 110px; }
.grid th { font-weight: 400; padding: 0; background: #efefef; border-right: 1px solid #b5b5b5; }
.grid thead th { height: 18px; padding-top: 1px; line-height: 16px; border-bottom: 1px solid #999; }
.grid thead .corner { border-right-color: #ccc; padding: 3px 0 0 15px; }
.grid thead .cut { border-right-color: #efefef; background: linear-gradient(#aaa, #aaa) right 1px top / 1px 100% no-repeat #efefef; }
.grid thead .after { background: linear-gradient(#aaa, #aaa) 1px 0 / 1px 100% no-repeat #efefef; }
.grid thead .sel { background: #d2d2d2; color: #217346; border-bottom: 3px solid #217346; line-height: 14px; }
.grid td { height: 30px; padding: 2px 0 0 3px; background: #fff; border-right: 1px solid #dcdcdc; border-bottom: 1px solid #dcdcdc; white-space: nowrap; overflow: hidden; }
.grid td:nth-child(2) { padding-left: 1px; }
.grid td:nth-child(8) { background: #e6f4d9; border-color: #d0dfc4; color: #1f2b14; }
.grid td:nth-child(6) { padding-left: 2px; }
.grid tbody th { border-right-color: #999; border-bottom: 1px solid #999; vertical-align: bottom; font-size: 14px; line-height: 15px; padding-right: 2px; }
.grid tbody .fold { border-bottom-color: #efefef; background: linear-gradient(#999, #999) 0 27px / 100% 1px no-repeat #efefef; }
.grid tbody .unfold { background: linear-gradient(#999, #999) 0 1px / 100% 1px no-repeat #efefef; }
.grid tbody .unfold.fold { background: linear-gradient(#999, #999) 0 27px / 100% 1px no-repeat, linear-gradient(#999, #999) 0 1px / 100% 1px no-repeat, #efefef; }
.vscroll { width: 21px; display: flex; flex-direction: column; align-items: center; padding: 5px 0 1px; }
.vtrack { flex: 1; padding-top: 405px; }
.vthumb { width: 9px; height: 230px; border-radius: 5px; background: #6e6e6e; }

/* annotations over the sheet */
.active-line { position: absolute; left: 839px; top: 556px; width: 113px; height: 4px; background: #217346; border-bottom: 1px solid #fff; }
.mark-box { position: absolute; left: 825px; top: 545px; width: 137px; height: 29px; border: 6px solid #f00; border-radius: 8px; box-shadow: 1px 3px 5px rgba(0,0,0,.5), inset 1px 3px 4px rgba(0,0,0,.25); }
.mark-num { position: absolute; left: 787px; top: 501px; width: 42px; height: 42px; border: 2px solid #f00; border-radius: 21px; outline: 3px solid #fff; outline-offset: -1px; background: radial-gradient(circle at 60% 60%, #bbb, #fff 75%); color: #f00; font: 500 40px/36px "Noto Sans CJK JP", sans-serif; text-align: center; box-shadow: 2px 3px 6px 3px rgba(0,0,0,.4); text-shadow: 2px 0 #fff, -2px 0 #fff, 0 2px #fff, 0 -2px #fff; }

/* find dialog */
.dialog { position: absolute; left: 1048px; top: 88px; width: 553px; background: #f0f0f0; border: 1px solid #999; box-shadow: 2px 4px 14px rgba(0,0,0,.35); color: #000; }
.dlg-title { height: 30px; background: #fff; color: #999; display: flex; align-items: center; padding: 0 0 2px 8px; }
.dlg-title span { flex: 1; }
.dlg-title button { width: 46px; height: 28px; display: grid; place-items: center; }
.dlg-tabs { display: flex; align-items: flex-end; padding: 8px 0 0 6px; height: 32px; }
.dlg-tabs button { width: 54px; height: 22px; border: 1px solid #dadada; border-width: 1px 1px 0 0; line-height: 20px; }
.dlg-tabs .on { width: 63px; height: 25px; margin-bottom: -1px; padding-right: 4px; background: #fff; border-left-width: 1px; }
.panel { margin: 0 7px 0 6px; background: #fff; border: 1px solid #dadada; height: 164px; padding: 10px 7px 9px 8px; display: flex; flex-direction: column; justify-content: space-between; }
.find-row { display: flex; align-items: center; gap: 10px; }
.find-row label { width: 103px; white-space: nowrap; }
.wcombo { display: flex; height: 25px; border: 1px solid #a9a9a9; background: #fff; position: relative; }
.wcombo input, .wcombo select { flex: 1; width: 100%; min-width: 0; padding-left: 3px; }
.wcombo button, .wcombo i { width: 17px; background: #e1e1e1; border-left: 1px solid #a9a9a9; display: grid; place-items: center; color: #444; }
.wcombo i { position: absolute; right: 0; top: 0; bottom: 0; pointer-events: none; }
.what { width: 200px; height: 23px; }
output { width: 85px; height: 23px; border: 1px solid #000; text-align: center; line-height: 20px; font-size: 11px; white-space: nowrap; }
.wbtn { height: 25px; background: #e1e1e1; border: 1px solid #adadad; display: flex; align-items: center; justify-content: center; line-height: 20px; }
.fmt { width: 103px; height: 21px; padding-right: 3px; }
.fmt span { flex: 1; }
.opts { display: flex; align-items: flex-end; }
.sel-grid { display: grid; grid-template-columns: 81px 65px; row-gap: 4px; align-items: center; white-space: nowrap; }
.checks { flex: 1; display: flex; flex-direction: column; margin-left: 9px; align-self: flex-start; white-space: nowrap; }
.checks label { display: flex; align-items: center; height: 23px; gap: 4px; }
.checks input { appearance: none; width: 13px; height: 13px; border: 1px solid #333; background: #fff; flex: none; }
.opt { width: 102px; font-size: 11px; }
.dlg-buttons { display: flex; justify-content: flex-end; padding: 11px 6px 8px 0; }
.all { width: 85px; font-size: 11px; } .next { width: 79px; margin: 0 19px 0 10px; border: 2px solid #0078d7; font-size: 11px; } .close { width: 74px; }
.results { height: 249px; background: #fff; border: 1px solid #828790; display: flex; justify-content: space-between; padding-left: 5px; }
.results table { width: 528px; table-layout: fixed; border-collapse: separate; border-spacing: 0; font: 15px/20px "Noto Sans", "Noto Sans CJK JP", sans-serif; align-self: flex-start; }
.r1 { width: 192px; } .r2 { width: 67px; } .r3 { width: 50px; } .r4 { width: 64px; } .r5 { width: 140px; }
.results th { height: 25px; padding: 0 0 0 7px; text-align: left; font-weight: 400; border-right: 1px solid #e5e5e5; }
.results td { height: 24px; padding: 0 0 0 7px; white-space: nowrap; }
.results th:first-child, .results td:first-child { padding-left: 3px; }
.results .more span { display: block; width: 1px; height: 11px; background: repeating-linear-gradient(#555 0 1px, transparent 1px 3px); }
.hit td { background: linear-gradient(#f00, #f00) 0 100% / 100% 4px no-repeat #0078d7; color: #fff; }
.rscroll { width: 16px; margin: 1px 1px 1px 0; background: #f0f0f0; display: flex; flex-direction: column; align-items: center; padding: 4px 0; }
.rtrack { flex: 1; padding-top: 4px; }
.rthumb { width: 15px; height: 136px; background: #cdcdcd; }
.dlg-status { height: 21px; display: flex; justify-content: space-between; align-items: flex-end; padding: 0 1px 2px; line-height: 17px; }

/* sheet tabs and status */
.tabbar { height: 32px; display: flex; align-items: center; border-bottom: 1px solid #c6c6c6; padding: 0 0 2px 28px; }
.n2 { margin-left: 24px; }
.sheet-tab { width: 68px; height: 28px; margin: 0 4px 0 48px; align-self: flex-start; background: #fff; border: 1px solid #d8d8d8; border-top: 0; border-radius: 0 0 6px 6px; font-size: 14px; display: flex; justify-content: center; align-items: flex-start; }
.sheet-tab span { border-bottom: 2px solid #107c41; line-height: 24px; padding: 0 2px; height: 26px; }
.tabbar hr { height: 18px; }
.add { margin: 0 auto 0 41px; }
.hscroll { width: 728px; height: 17px; margin: 0 19px 0 16px; border-radius: 8px; background: #f5f5f5; display: flex; align-items: center; padding: 0 5px 0 3px; gap: 5px; }
.htrack { flex: 1; }
.hthumb { width: 376px; height: 9px; border-radius: 5px; background: #6e6e6e; }
.statusbar { height: 21px; background: #f5f5f5; display: flex; align-items: center; padding-left: 11px; white-space: nowrap; }
.macro { margin-left: 20px; }
.views { margin-left: auto; display: flex; align-items: center; }
.views button { width: 40px; height: 21px; display: grid; place-items: center; }
.views .on { background: #dedede; }
.pm { width: 19px; text-align: center; font-size: 15px; }
.zoom { appearance: none; width: 100px; height: 14px; background: linear-gradient(#666, #666) 0 50% / 100% 1px no-repeat; }
.zoom::-webkit-slider-thumb { appearance: none; width: 4px; height: 11px; background: #555; }
.pct100 { margin: 0 20px 0 8px; }
```
